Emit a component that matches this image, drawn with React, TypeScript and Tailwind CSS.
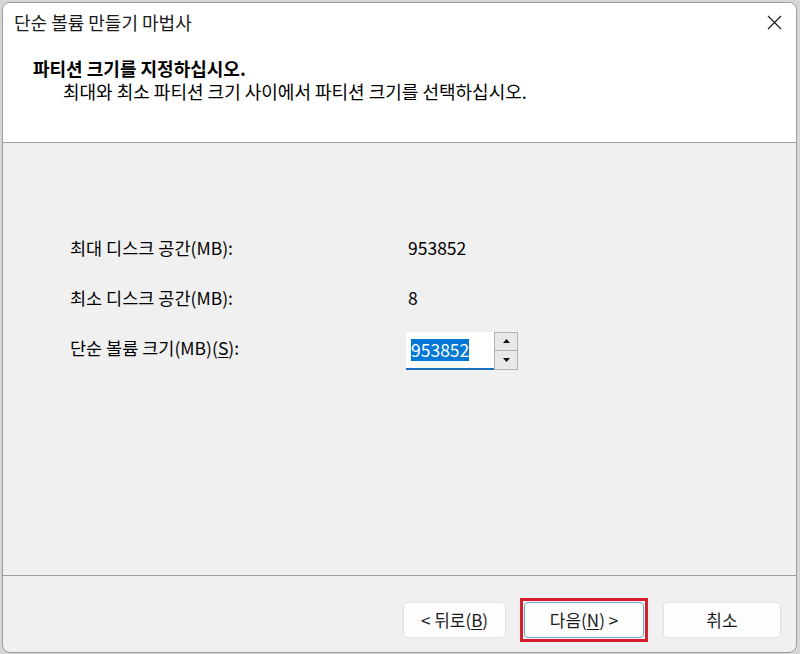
import React from 'react';

const font = { fontFamily: '"Noto Sans CJK KR", "Noto Sans", sans-serif' };

const CloseIcon = () => (
    <svg width="15" height="15" viewBox="0 0 15 15" fill="none">
        <path d="M1 1 L14 14 M14 1 L1 14" stroke="#1a1a1a" strokeWidth="1.2" />
    </svg>
);

const Arrow = ({ up }: { up?: boolean }) => (
    <svg width="7" height="4" viewBox="0 0 7 4">
        {up ? <path d="M3.5 0 L7 4 L0 4 Z" fill="#111" /> : <path d="M0 0 L7 0 L3.5 4 Z" fill="#111" />}
    </svg>
);

const WizardButton = ({ label, width, selected }: { label: React.ReactNode; width: string; selected?: boolean }) => (
    <button
        className={`${width} h-[36px] rounded-[4px] bg-[#fdfdfd] text-[17px] text-[#1a1a1a] flex items-center justify-center border ${
            selected ? 'border-[#7aa7d6]' : 'border-[#e2e2e2]'
        }`}
    >
        {label}
    </button>
);

export default function App() {
    return (
        <div className="w-[800px] h-[654px] bg-[#d6d6d6] pt-[2px] pl-[2px] pr-[3px] pb-[1px]" style={font}>
            <div className="h-full flex flex-col rounded-[8px] border border-[#9c9c9c] overflow-hidden bg-[#f0f0f0]">
                {/* header */}
                <div className="h-[140px] bg-white border-b border-[#a0a0a0] shrink-0">
                    <div className="h-[38px] flex items-center justify-between pl-[11px] pr-[14px]">
                        <span className="text-[18px] text-[#1a1a1a]">단순 볼륨 만들기 마법사</span>
                        <CloseIcon />
                    </div>
                    <div className="mt-[16px] pl-[30px] text-[18px] leading-[23px] text-black">
                        <div className="font-bold">파티션 크기를 지정하십시오.</div>
                        <div className="pl-[30px]">최대와 최소 파티션 크기 사이에서 파티션 크기를 선택하십시오.</div>
                    </div>
                </div>

                {/* body */}
                <div className="flex-1 border-b border-[#a0a0a0] pl-[67px] pt-[80px]">
                    <div className="grid grid-cols-[338px_1fr] auto-rows-[50px] items-center text-[17.5px] text-black">
                        <span>최대 디스크 공간(MB):</span>
                        <span>953852</span>
                        <span>최소 디스크 공간(MB):</span>
                        <span>8</span>
                        <span>
                            단순 볼륨 크기(MB)(<span className="underline underline-offset-2">S</span>):
                        </span>
                        <div className="flex items-center -ml-[2px] mt-[5px]">
                            <div className="w-[88px] h-[38px] bg-white border-b-[2px] border-[#1f6fc0] flex items-center pl-[5px]">
                                <span className="bg-[#0078d7] text-white leading-[22px] text-[17.5px]">953852</span>
                            </div>
                            <div className="flex flex-col">
                                <div className="w-[24px] h-[19px] bg-[#e8e8e8] border border-[#b4b4b4] flex items-center justify-center">
                                    <Arrow up />
                                </div>
                                <div className="w-[24px] h-[19px] bg-[#e8e8e8] border border-t-0 border-[#b4b4b4] flex items-center justify-center">
                                    <Arrow />
                                </div>
                            </div>
                        </div>
                    </div>
                </div>

                {/* footer */}
                <div className="h-[76px] shrink-0 flex items-start justify-end pt-[22px] pr-[15px]">
                    <div className="mt-[4px]">
                        <WizardButton width="w-[103px]" label={<>&lt; 뒤로(<span className="underline underline-offset-2">B</span>)</>} />
                    </div>
                    <div className="ml-[14px] border-[3px] border-[#d51f2e] p-[1px]">
                        <WizardButton width="w-[120px]" selected label={<>다음(<span className="underline underline-offset-2">N</span>) &gt;</>} />
                    </div>
                    <div className="ml-[15px] mt-[4px]">
                        <WizardButton width="w-[118px]" label="취소" />
                    </div>
                </div>
            </div>
        </div>
    );
}
